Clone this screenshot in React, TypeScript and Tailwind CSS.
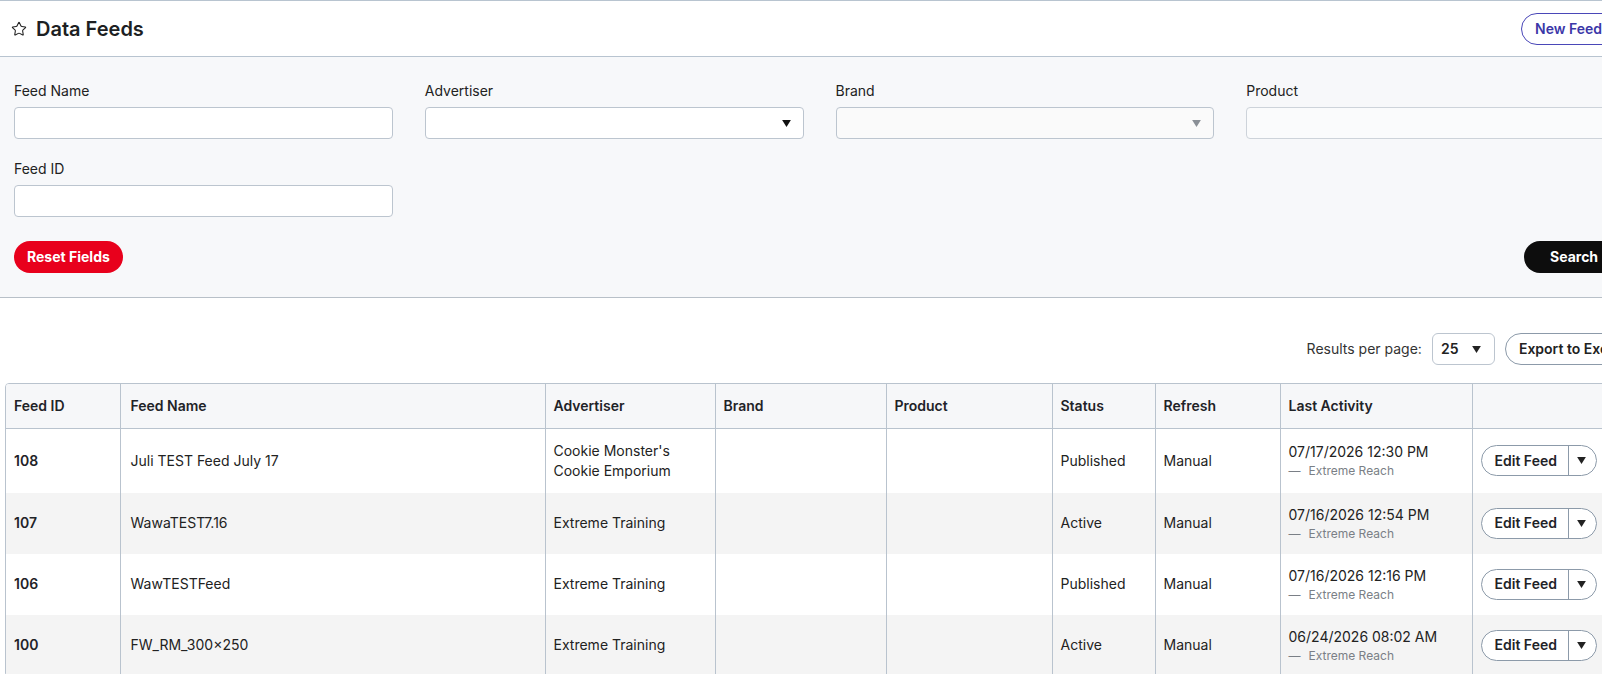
import { Star } from 'lucide-react';

type Feed = {
  id: string;
  name: string;
  advertiser: string[];
  status: string;
  refresh: string;
  date: string;
};

const feeds: Feed[] = [
  { id: '108', name: 'Juli TEST Feed July 17', advertiser: ["Cookie Monster's", 'Cookie Emporium'], status: 'Published', refresh: 'Manual', date: '07/17/2026 12:30 PM' },
  { id: '107', name: 'WawaTEST7.16', advertiser: ['Extreme Training'], status: 'Active', refresh: 'Manual', date: '07/16/2026 12:54 PM' },
  { id: '106', name: 'WawTESTFeed', advertiser: ['Extreme Training'], status: 'Published', refresh: 'Manual', date: '07/16/2026 12:16 PM' },
  { id: '100', name: 'FW_RM_300×250', advertiser: ['Extreme Training'], status: 'Active', refresh: 'Manual', date: '06/24/2026 08:02 AM' },
];

const columns = ['Feed ID', 'Feed Name', 'Advertiser', 'Brand', 'Product', 'Status', 'Refresh', 'Last Activity', ''];
const widths = ['w-[114px]', 'w-[425px]', 'w-[170px]', 'w-[171px]', 'w-[166px]', 'w-[103px]', 'w-[125px]', 'w-[192px]', 'w-[164px]'];

function Caret({ className }: { className?: string }) {
  return (
    <svg viewBox="0 0 10 8" className={className} fill="currentColor">
      <path d="M0 0h10L5 8z" />
    </svg>
  );
}

function Field({ label, children }: { label: string; children: React.ReactNode }) {
  return (
    <div>
      <label className="block text-sm leading-5 text-[#222] mb-1.5">{label}</label>
      {children}
    </div>
  );
}

function SelectBox({ disabled }: { disabled?: boolean }) {
  return (
    <div
      className={`h-8 rounded border border-[#bcc5cf] flex items-center justify-end pr-3 ${
        disabled ? 'bg-[#fafafa] text-[#8a8f96]' : 'bg-white text-[#111]'
      }`}
    >
      <Caret className="w-[9px] h-[7px]" />
    </div>
  );
}

export default function App() {
  return (
    <div className="w-full overflow-hidden bg-white font-['Inter',sans-serif] text-[#222]">
      <div className="w-[1639px]">
        {/* header */}
        <div className="h-[57px] border-t border-b border-[#b8c4d0] flex items-center justify-between pl-[11px] pr-[14px]">
          <div className="flex items-center gap-[9px]">
            <Star className="w-[16px] h-[16px] text-[#222]" strokeWidth={1.6} />
            <h1 className="text-[20px] font-semibold text-[#1d1f23]">Data Feeds</h1>
          </div>
          <button className="h-8 px-[13px] w-[104px] rounded-full border border-[#4a47b8] text-[#3b37a8] text-sm font-semibold text-left">
            New Feed
          </button>
        </div>

        {/* filters */}
        <div className="bg-[#f7f8fa] border-b border-[#b8c0c8] px-[14px] pt-6 pb-6">
          <div className="grid grid-cols-4 gap-x-8 gap-y-5">
            <Field label="Feed Name">
              <input className="w-full h-8 rounded border border-[#bcc5cf] bg-white" />
            </Field>
            <Field label="Advertiser">
              <SelectBox />
            </Field>
            <Field label="Brand">
              <SelectBox disabled />
            </Field>
            <Field label="Product">
              <div className="h-8 rounded border border-[#cdd3da] bg-[#fafbfc]" />
            </Field>
            <Field label="Feed ID">
              <input className="w-full h-8 rounded border border-[#bcc5cf] bg-white" />
            </Field>
          </div>
          <div className="flex items-center justify-between mt-6">
            <button className="h-8 px-[13px] rounded-full bg-[#e8001c] text-white text-sm font-bold">Reset Fields</button>
            <button className="h-8 w-[101px] pl-[26px] text-left rounded-full bg-[#0d0d0d] text-white text-sm font-bold">Search</button>
          </div>
        </div>

        {/* results */}
        <div className="px-[5px] pt-[35px]">
          <div className="flex items-center justify-end gap-[10px]">
            <span className="text-sm text-[#333]">Results per page:</span>
            <div className="w-[63px] h-8 rounded-md border border-[#bcc5cf] flex items-center justify-between pl-[8px] pr-[13px]">
              <span className="text-sm font-semibold text-[#222]">25</span>
              <Caret className="w-[9px] h-[7px] text-[#222]" />
            </div>
            <button className="h-8 px-[13px] rounded-full border border-[#8c9aa9] text-sm font-semibold text-[#222]">
              Export to Excel
            </button>
          </div>

          <div className="mt-[18px] border border-[#b9c3ce] rounded-sm overflow-hidden">
            <table className="w-full table-fixed border-collapse text-sm">
              <colgroup>
                {widths.map((w, i) => (
                  <col key={i} className={w} />
                ))}
              </colgroup>
              <thead>
                <tr className="bg-[#f6f7f9] h-[44px] border-b border-[#b9c3ce]">
                  {columns.map((c, i) => (
                    <th
                      key={i}
                      className={`text-left font-semibold text-[#1f2328] px-2 ${i > 0 ? 'border-l border-[#b9c3ce]' : ''} ${i === 1 ? 'pl-2.5' : ''}`}
                    >
                      {c}
                    </th>
                  ))}
                </tr>
              </thead>
              <tbody>
                {feeds.map((f, r) => (
                  <tr key={f.id} className={r % 2 === 1 ? 'bg-[#f4f4f4]' : 'bg-white'}>
                    <td className="px-2 py-3 font-semibold text-[#1f2328]">{f.id}</td>
                    <td className="pl-2.5 pr-2 py-3 border-l border-[#b9c3ce]">{f.name}</td>
                    <td className="px-2 py-3 border-l border-[#b9c3ce] leading-5">
                      {f.advertiser.map((a) => (
                        <div key={a}>{a}</div>
                      ))}
                    </td>
                    <td className="px-2 py-3 border-l border-[#b9c3ce]" />
                    <td className="px-2 py-3 border-l border-[#b9c3ce]" />
                    <td className="px-2 py-3 border-l border-[#b9c3ce]">{f.status}</td>
                    <td className="px-2 py-3 border-l border-[#b9c3ce]">{f.refresh}</td>
                    <td className="px-2 py-3 border-l border-[#b9c3ce]">
                      <div className="leading-5 text-[#222]">{f.date}</div>
                      <div className="text-xs leading-[17px] text-[#7a7f86]">
                        <span className="mr-2">—</span>Extreme Reach
                      </div>
                    </td>
                    <td className="pl-2 pr-2 py-3 border-l border-[#b9c3ce]">
                      <div className="inline-flex h-[31px] rounded-full border border-[#8c9aa9] bg-white overflow-hidden">
                        <span className="w-[87px] pl-[13px] flex items-center font-semibold text-[#1f2328] border-r border-[#8c9aa9]">
                          Edit Feed
                        </span>
                        <span className="w-[27px] flex items-center justify-center pr-[2px]">
                          <Caret className="w-[9px] h-[7px] text-[#222]" />
                        </span>
                      </div>
                    </td>
                  </tr>
                ))}
              </tbody>
            </table>
          </div>
        </div>
      </div>
    </div>
  );
}
